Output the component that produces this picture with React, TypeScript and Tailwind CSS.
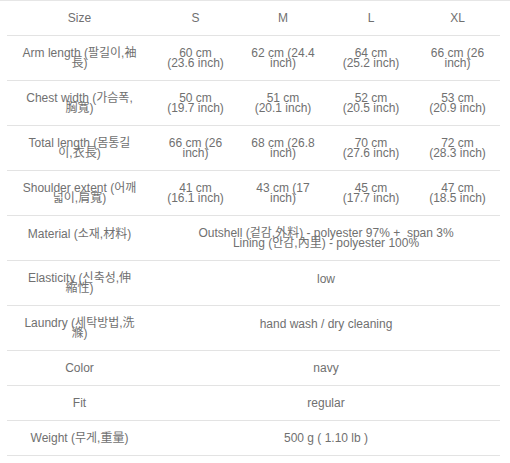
import React from 'react'

type Row = {
  label: React.ReactNode
  values: React.ReactNode[]
}

const rows: Row[] = [
  {
    label: <>Arm length (팔길이,袖<br />長)</>,
    values: [
      <>60 cm<br />(23.6 inch)</>,
      <>62 cm (24.4<br />inch)</>,
      <>64 cm<br />(25.2 inch)</>,
      <>66 cm (26<br />inch)</>,
    ],
  },
  {
    label: <>Chest width (가슴폭,<br />胸寬)</>,
    values: [
      <>50 cm<br />(19.7 inch)</>,
      <>51 cm<br />(20.1 inch)</>,
      <>52 cm<br />(20.5 inch)</>,
      <>53 cm<br />(20.9 inch)</>,
    ],
  },
  {
    label: <>Total length (몸통길<br />이,衣長)</>,
    values: [
      <>66 cm (26<br />inch)</>,
      <>68 cm (26.8<br />inch)</>,
      <>70 cm<br />(27.6 inch)</>,
      <>72 cm<br />(28.3 inch)</>,
    ],
  },
  {
    label: <>Shoulder extent (어깨<br />넓이,肩寬)</>,
    values: [
      <>41 cm<br />(16.1 inch)</>,
      <>43 cm (17<br />inch)</>,
      <>45 cm<br />(17.7 inch)</>,
      <>47 cm<br />(18.5 inch)</>,
    ],
  },
]

const wide: { label: React.ReactNode; value: React.ReactNode; labelSingle?: boolean; valueSingle?: boolean; tall: boolean }[] = [
  {
    label: 'Material (소재,材料)',
    value: <>Outshell (겉감,外料) - polyester 97% + &nbsp;span 3%<br />Lining (안감,內里) - polyester 100%</>,
    labelSingle: true,
    tall: true,
  },
  { label: <>Elasticity (신축성,伸<br />縮性)</>, value: 'low', valueSingle: true, tall: true },
  { label: <>Laundry (세탁방법,洗<br />滌)</>, value: 'hand wash / dry cleaning', valueSingle: true, tall: true },
  { label: 'Color', value: 'navy', tall: false },
  { label: 'Fit', value: 'regular', tall: false },
  { label: 'Weight (무게,重量)', value: '500 g ( 1.10 lb )', tall: false },
]

const cell = 'flex items-center justify-center text-center whitespace-nowrap'

export default function App() {
  return (
    <div
      className="w-[510px] h-[463px] bg-white text-[12px] leading-[10px] text-[#707070]"
      style={{ fontFamily: '"Liberation Sans", "Noto Sans CJK KR", sans-serif' }}
    >
      <div className="border-t border-[#e6e6e6] pl-[7px] pr-[10px]">
        {/* 헤더 */}
        <div className="grid grid-cols-[145px_87px_88px_88px_85px] h-[35px] border-b border-[#e3e3e3]">
          {['Size', 'S', 'M', 'L', 'XL'].map((h) => (
            <div key={h} className={cell}>{h}</div>
          ))}
        </div>

        {rows.map((r, i) => (
          <div key={i} className="grid grid-cols-[145px_87px_88px_88px_85px] h-[45px] border-b border-[#e3e3e3]">
            <div className={cell}>{r.label}</div>
            {r.values.map((v, j) => (
              <div key={j} className={cell}>{v}</div>
            ))}
          </div>
        ))}

        {wide.map((w, i) => (
          <div
            key={i}
            className={`grid grid-cols-[145px_348px] border-b border-[#e3e3e3] ${w.tall ? 'h-[45px]' : 'h-[35px]'}`}
          >
            <div className={`${cell} ${w.labelSingle ? 'pb-[9px]' : ''}`}>{w.label}</div>
            <div className={`${cell} ${w.valueSingle ? 'pb-[8px]' : ''}`}>{w.value}</div>
          </div>
        ))}
      </div>
    </div>
  )
}
